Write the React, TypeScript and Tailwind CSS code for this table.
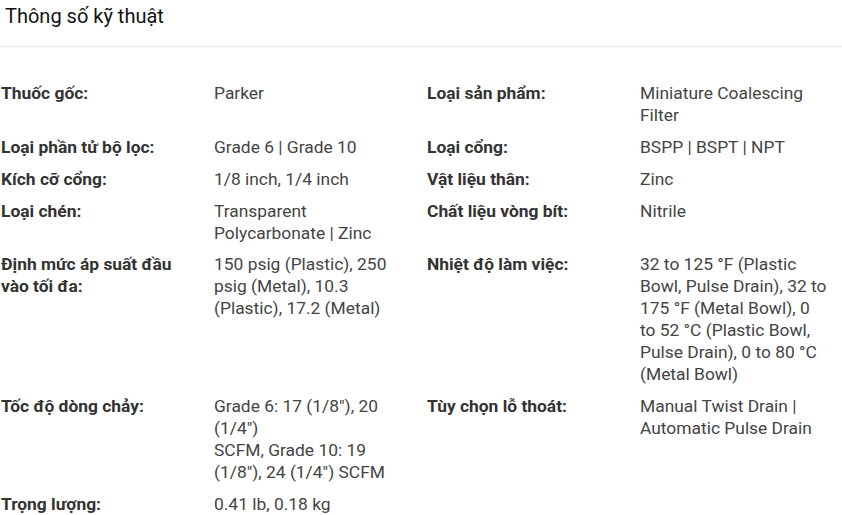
import React from 'react';

const rows: [string, React.ReactNode, string, React.ReactNode][] = [
  ['Thuốc gốc:', 'Parker', 'Loại sản phẩm:', 'Miniature Coalescing Filter'],
  ['Loại phần tử bộ lọc:', 'Grade 6 | Grade 10', 'Loại cổng:', 'BSPP | BSPT | NPT'],
  ['Kích cỡ cổng:', '1/8 inch, 1/4 inch', 'Vật liệu thân:', 'Zinc'],
  ['Loại chén:', 'Transparent Polycarbonate | Zinc', 'Chất liệu vòng bít:', 'Nitrile'],
  [
    'Định mức áp suất đầu vào tối đa:',
    '150 psig (Plastic), 250 psig (Metal), 10.3 (Plastic), 17.2 (Metal)',
    'Nhiệt độ làm việc:',
    '32 to 125 °F (Plastic Bowl, Pulse Drain), 32 to 175 °F (Metal Bowl), 0 to 52 °C (Plastic Bowl, Pulse Drain), 0 to 80 °C (Metal Bowl)',
  ],
  [
    'Tốc độ dòng chảy:',
    <>
      Grade 6: 17 (1/8"), 20 (1/4")
      <br />
      SCFM, Grade 10: 19 (1/8"), 24 (1/4") SCFM
    </>,
    'Tùy chọn lỗ thoát:',
    'Manual Twist Drain | Automatic Pulse Drain',
  ],
  ['Trọng lượng:', '0.41 lb, 0.18 kg', '', ''],
];

export default function App() {
  return (
    <div className="w-[842px] h-[515px] overflow-hidden bg-white font-['Roboto',sans-serif]">
      <div className="border-b border-[#ececec] pl-[5px] pt-[3px] pb-[17px]">
        <h2 className="text-[20px] leading-[26px] text-[#111]">Thông số kỹ thuật</h2>
      </div>

      <div className="mt-[31px] grid grid-cols-[213px_213px_213px_1fr] text-[17.4px] leading-[21.9px]">
        {rows.map(([l1, v1, l2, v2], i) => (
          <React.Fragment key={i}>
            <div className="py-[5px] pl-[1px] pr-[20px] font-bold text-[#333]">{l1}</div>
            <div className="py-[5px] pl-[1px] pr-[25px] text-[#444]">{v1}</div>
            <div className="py-[5px] pl-[1px] pr-[20px] font-bold text-[#333]">{l2}</div>
            <div className="py-[5px] pl-[1px] pr-[15px] text-[#444]">{v2}</div>
          </React.Fragment>
        ))}
      </div>
    </div>
  );
}
